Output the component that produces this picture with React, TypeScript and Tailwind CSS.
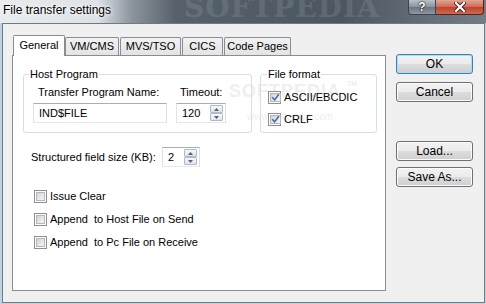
import React from "react";

const Check = ({ checked }: { checked?: boolean }) => (
  <span className="w-[13px] h-[13px] shrink-0 border border-[#8e8f8f] bg-white p-[1px] flex">
    <span className="flex-1 border border-[#b4b8bd] bg-[linear-gradient(135deg,#cfd3d8,#f7f7f7)] flex items-center justify-center">
      {checked && (
        <svg width="9" height="9" viewBox="0 0 9 9">
          <path d="M1.3 4.3 L3.6 6.9 L7.8 1.2" fill="none" stroke="#4a62a0" strokeWidth="1.5" />
        </svg>
      )}
    </span>
  </span>
);

const Spinner = () => (
  <div className="flex flex-col w-[13px] gap-0">
    <div className="h-[8px] border border-[#b3bac2] rounded-[1px] bg-[linear-gradient(#f8f8f8,#dfe4ea)] flex items-center justify-center">
      <svg width="5" height="3" viewBox="0 0 5 3">
        <path d="M0 3 L2.5 0 L5 3Z" fill="#4d6185" />
      </svg>
    </div>
    <div className="h-[8px] border border-[#b3bac2] rounded-[1px] bg-[linear-gradient(#f8f8f8,#dfe4ea)] flex items-center justify-center">
      <svg width="5" height="3" viewBox="0 0 5 3">
        <path d="M0 0 L2.5 3 L5 0Z" fill="#4d6185" />
      </svg>
    </div>
  </div>
);

const Field = ({ value, width, spin }: { value: string; width: string; spin?: boolean }) => (
  <div
    className={`${width} h-[20px] flex items-center bg-white border border-[#abadb3] border-l-[#e2e3ea] border-r-[#dbdfe6] border-b-[#e3e9ef] pl-[5px] pr-[2px]`}
  >
    <span className="flex-1">{value}</span>
    {spin && <Spinner />}
  </div>
);

const Button = ({ label, primary }: { label: string; primary?: boolean }) => (
  <button
    className={`w-[77px] h-[20px] rounded-[3px] border ${
      primary ? "border-[#3c7fb1] shadow-[inset_0_0_0_1px_#a8def5]" : "border-[#707070] shadow-[inset_0_0_0_1px_#fcfcfc]"
    } bg-[linear-gradient(#f2f2f2_0%,#ebebeb_50%,#dddddd_51%,#cfcfcf_100%)] text-[12px] leading-none text-black`}
  >
    {label}
  </button>
);

const tabs = [
  { name: "VM/CMS", w: "w-[54px]", ml: "" },
  { name: "MVS/TSO", w: "w-[61px]", ml: "ml-px" },
  { name: "CICS", w: "w-[41px]", ml: "ml-px" },
  { name: "Code Pages", w: "w-[67px]", ml: "ml-px" },
];

export default function App() {
  return (
    <div className="w-[486px] h-[304px] relative overflow-hidden bg-[#c3d2e0] font-['Liberation_Sans',Arial,sans-serif] text-[11px] text-black">
      {/* title bar */}
      <div className="h-[23px] relative flex items-start bg-[linear-gradient(90deg,#e9ecef_0%,#dde2e6_20%,#8d969e_27%,#56616b_36%,#4b5661_70%,#5f6a74_85%,#737d86_100%)]">
        <span className="absolute left-[184px] top-[-6px] text-[28px] font-bold tracking-[1px] text-white/10 font-['DejaVu_Serif',serif] leading-none select-none">
          SOFTPEDIA
        </span>
        <span className="pl-[3px] pt-[3px] text-[12px] leading-[14px] [text-shadow:0_0_6px_#fff,0_0_3px_#fff] relative">
          File transfer settings
        </span>
        <div className="ml-auto mr-[2px] flex relative">
          <div className="w-[28px] h-[15px] border border-[#3d444b] border-t-0 rounded-bl-[4px] bg-[linear-gradient(#b8c0c8,#8a949e_50%,#6b757f_51%,#8e98a2)] flex items-center justify-center text-white font-bold text-[12px] [text-shadow:0_0_2px_#000,0_0_1px_#000]">
            ?
          </div>
          <div className="w-[48px] h-[15px] border border-[#4a2a24] border-t-0 border-l-0 rounded-br-[4px] bg-[linear-gradient(#e0a595,#cf6a55_50%,#c0432b_51%,#d2674e)] flex items-center justify-center">
            <svg width="12" height="10" viewBox="0 0 12 10">
              <path d="M2 1 L10 9 M10 1 L2 9" stroke="#3a1f1a" strokeWidth="4" strokeLinecap="square" />
              <path d="M2 1 L10 9 M10 1 L2 9" stroke="#fff" strokeWidth="2.2" strokeLinecap="square" />
            </svg>
          </div>
        </div>
      </div>

      {/* client area */}
      <div className="ml-[2px] w-[483px] h-[280px] border border-[#6e7a86] bg-[#f0f0f0] flex">
        {/* tab control */}
        <div className="ml-[9px] mt-[11px] flex flex-col">
          <div className="h-[20px] flex items-end pl-[1px] relative z-10">
            <div className="w-[52px] h-[21px] -mb-px bg-white border border-b-0 border-[#898c95] rounded-t-[2px] flex items-center justify-center pb-[2px]">
              General
            </div>
            {tabs.map((t) => (
              <div
                key={t.name}
                className={`${t.w} ${t.ml} h-[18px] border border-b-0 border-[#898c95] rounded-t-[2px] bg-[linear-gradient(#f2f2f2,#e3e3e3)] flex items-center justify-center`}
              >
                {t.name}
              </div>
            ))}
          </div>
          <div className="w-[374px] h-[236px] bg-white border border-[#898c95] relative">
            <span className="absolute left-[216px] top-[26px] text-[18px] font-bold text-[#efefef] tracking-[1px] leading-none select-none">
              SOFTPEDIA
            </span>
            <span className="absolute left-[334px] top-[24px] text-[7px] text-[#e8e8e8] leading-none select-none">TM</span>
            <span className="absolute left-[234px] top-[56px] text-[10px] text-[#efefef] leading-none select-none">
              www.softpedia.com
            </span>

            <div className="flex mt-[18px] ml-[10px] relative">
              {/* host program */}
              <div className="relative w-[229px] h-[59px] border border-[#d5dfe5] rounded-[3px] flex">
                <span className="absolute left-[5px] top-[-7px] bg-white px-[1px] leading-[13px]">Host Program</span>
                <div className="ml-[9px] flex flex-col">
                  <span className="pl-[5px] mt-[11px] h-[13px] leading-[13px]">Transfer Program Name:</span>
                  <div className="mt-[4px]">
                    <Field value="IND$FILE" width="w-[134px]" />
                  </div>
                </div>
                <div className="ml-[9px] flex flex-col">
                  <span className="pl-[4px] mt-[11px] h-[13px] leading-[13px]">Timeout:</span>
                  <div className="mt-[4px]">
                    <Field value="120" width="w-[50px]" spin />
                  </div>
                </div>
              </div>

              {/* file format */}
              <div className="relative ml-[8px] w-[117px] h-[59px] border border-[#d5dfe5] rounded-[3px] flex flex-col pl-[7px]">
                <span className="absolute left-[6px] top-[-7px] bg-white px-[1px] leading-[13px]">File format</span>
                <div className="mt-[16px] h-[13px] flex items-center gap-[3px]">
                  <Check checked />
                  <span>ASCII/EBCDIC</span>
                </div>
                <div className="mt-[9px] h-[13px] flex items-center gap-[3px]">
                  <Check checked />
                  <span>CRLF</span>
                </div>
              </div>
            </div>

            <div className="ml-[18px] mt-[14px] flex items-center">
              <span className="w-[131px]">Structured field size (KB):</span>
              <Field value="2" width="w-[38px]" spin />
            </div>

            <div className="ml-[21px] mt-[23px] flex flex-col gap-[10px]">
              <div className="h-[13px] flex items-center gap-[3px]">
                <Check />
                <span>Issue Clear</span>
              </div>
              <div className="h-[13px] flex items-center gap-[3px]">
                <Check />
                <span className="whitespace-pre">Append  to Host File on Send</span>
              </div>
              <div className="h-[13px] flex items-center gap-[3px]">
                <Check />
                <span className="whitespace-pre">Append  to Pc File on Receive</span>
              </div>
            </div>
          </div>
        </div>

        {/* buttons */}
        <div className="ml-[10px] mt-[30px] flex flex-col">
          <Button label="OK" primary />
          <div className="mt-[8px]">
            <Button label="Cancel" />
          </div>
          <div className="mt-[39px]">
            <Button label="Load..." />
          </div>
          <div className="mt-[6px]">
            <Button label="Save As..." />
          </div>
        </div>
      </div>
    </div>
  );
}
